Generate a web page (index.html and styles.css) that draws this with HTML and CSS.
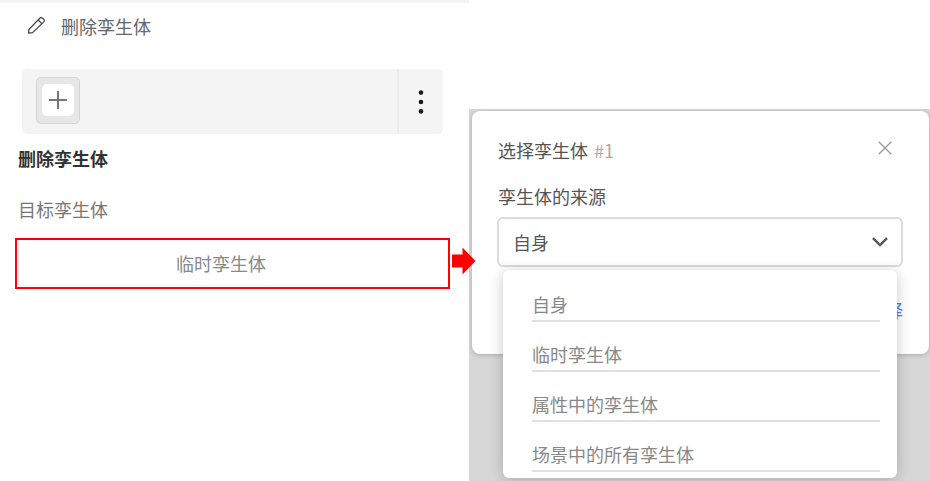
FILE: index.html
```
<!DOCTYPE html>
<html lang="zh-CN">
<head>
    <meta charset="UTF-8">
    <meta name="viewport" content="width=device-width, initial-scale=1.0">
    <title>删除孪生体</title>
    <link rel="stylesheet" href="styles.css">
</head>
<body>

    <!-- Action panel -->
    <div class="panel">
        <div class="panel-title">
            <svg class="pencil" viewBox="0 0 20 20" width="20" height="20">
                <path d="M2.6 18.2 L2.8 14.6 L14 3 Q15.1 2 16.2 3 L18 4.6 Q18.9 5.6 18 6.6 L6.6 17.6 Z M12.2 5 L15.8 8.6"/>
            </svg>
            <span>删除孪生体</span>
        </div>

        <div class="slot">
            <button class="add">
                <svg viewBox="0 0 32 32" width="32" height="32">
                    <path d="M16 7 V25 M7 16 H25"/>
                </svg>
            </button>
            <button class="more">
                <svg viewBox="0 0 6 26" width="6" height="26">
                    <circle cx="3" cy="3.6" r="2.3"/>
                    <circle cx="3" cy="13" r="2.3"/>
                    <circle cx="3" cy="22.4" r="2.3"/>
                </svg>
            </button>
        </div>

        <h2>删除孪生体</h2>
        <p class="label">目标孪生体</p>
        <div class="target">
            <div class="target-value">临时孪生体</div>
            <svg class="arrow" viewBox="0 0 24 28" width="24" height="28">
                <path d="M0 7.5 H10.5 V0.5 L23.5 14 L10.5 27.5 V20.5 H0 Z"/>
            </svg>
        </div>
    </div>

    <!-- Picker dialog -->
    <div class="overlay">
        <div class="dialog">
            <div class="dialog-head">
                <span>选择孪生体 <span class="index">#1</span></span>
                <svg class="close" viewBox="0 0 14 14" width="14" height="14">
                    <path d="M0.7 0.7 L13.3 13.3 M13.3 0.7 L0.7 13.3"/>
                </svg>
            </div>
            <p class="field-label">孪生体的来源</p>
            <div class="select">
                <span>自身</span>
                <svg class="chevron" viewBox="0 0 16 10" width="16" height="10">
                    <path d="M1 1.2 L8 8 L15 1.2"/>
                </svg>
                <ul class="menu">
                    <li>自身</li>
                    <li>临时孪生体</li>
                    <li>属性中的孪生体</li>
                    <li>场景中的所有孪生体</li>
                </ul>
            </div>
            <div class="link">选择</div>
        </div>
    </div>

</body>
</html>
```
FILE: styles.css
```
* {
    box-sizing: border-box;
}
body {
    display: flex;
    align-items: flex-start;
    margin: 0;
    height: 481px;
    overflow: hidden;
    background: white;
    font-family: "Noto Sans CJK SC", sans-serif;
    font-size: 18px;
    line-height: 26px;
    color: #666;
}
h2, p, ul {
    margin: 0;
    padding: 0;
}
button {
    padding: 0;
    border: none;
    background: none;
}
svg {
    display: block;
    fill: none;
}

/* Action panel */
.panel {
    width: 469px;
    flex: none;
    border-top: 3px solid #f3f4f6;
}
.panel-title {
    display: flex;
    align-items: center;
    gap: 15px;
    margin: 10px 0 0 26px;
}
.pencil {
    margin-top: -2px;
    stroke: #444;
    stroke-width: 1.3;
    stroke-linejoin: round;
}
.slot {
    display: flex;
    justify-content: space-between;
    width: 421px;
    height: 65px;
    margin: 30px 0 0 22px;
    background: #f4f4f4;
    border-radius: 5px;
}
.add {
    display: flex;
    align-items: center;
    justify-content: center;
    width: 44px;
    height: 47px;
    margin: 8px 0 0 14px;
    background: #e7e7e7;
    border: 1px solid #d4d4d4;
    border-radius: 5px;
}
.add svg {
    margin-top: -1px;
    background: white;
    border-radius: 5px;
    stroke: #777;
    stroke-width: 2;
}
.more {
    display: flex;
    align-items: center;
    justify-content: center;
    width: 46px;
    border-left: 2px solid #ececec;
}
.more svg {
    fill: #1a1a1a;
}
h2 {
    margin: 11px 0 0 18px;
    font-size: 18px;
    font-weight: 700;
    color: #333;
}
.label {
    margin: 25px 0 0 18px;
    color: #777;
}
.target {
    position: relative;
    width: 435px;
    height: 51px;
    margin: 16px 0 0 15px;
    padding: 1px;
    border: 2px solid #f00;
}
.target-value {
    height: 45px;
    padding-right: 23px;
    border: 1px solid #eee;
    border-top-color: white;
    border-right-color: white;
    border-radius: 4px;
    line-height: 42px;
    text-align: center;
    color: #888;
}
.arrow {
    position: absolute;
    left: 435px;
    top: 7px;
    fill: #f00;
    z-index: 2;
}

/* Picker dialog */
.overlay {
    flex: 1;
    height: 372px;
    margin-top: 109px;
    padding: 2px 1px 0 3px;
    background: #d7d7d7;
}
.dialog {
    height: 243px;
    padding: 26px 26px 0 25px;
    background: white;
    border-radius: 8px;
    box-shadow: 0 1px 5px rgba(0, 0, 0, 0.2);
}
.dialog-head {
    display: flex;
    justify-content: space-between;
    padding-left: 1px;
    color: #555;
}
.index {
    margin-left: 2px;
    color: #aaa;
}
.close {
    margin: 4px 11px 0 0;
    stroke: #999;
    stroke-width: 1.3;
}
.field-label {
    margin: 20px 0 0 1px;
    color: #555;
}
.select {
    position: relative;
    display: flex;
    align-items: center;
    justify-content: space-between;
    height: 50px;
    margin-top: 8px;
    padding: 0 13px 0 14px;
    border: 2px solid #dcdcdc;
    border-radius: 6px;
    color: #555;
}
.chevron {
    stroke: #555;
    stroke-width: 2.4;
}
.menu {
    position: absolute;
    left: 4px;
    top: 51px;
    width: 394px;
    height: 208px;
    padding: 2px 17px 0 29px;
    background: white;
    border-radius: 6px;
    box-shadow: 0 2px 14px rgba(0, 0, 0, 0.22);
    list-style: none;
    color: #888;
    z-index: 1;
}
.menu li {
    height: 50px;
    padding-top: 19px;
    border-bottom: 2px solid #e0e0e0;
}
.link {
    margin-top: 30px;
    text-align: right;
    color: #4a80f0;
}
```
